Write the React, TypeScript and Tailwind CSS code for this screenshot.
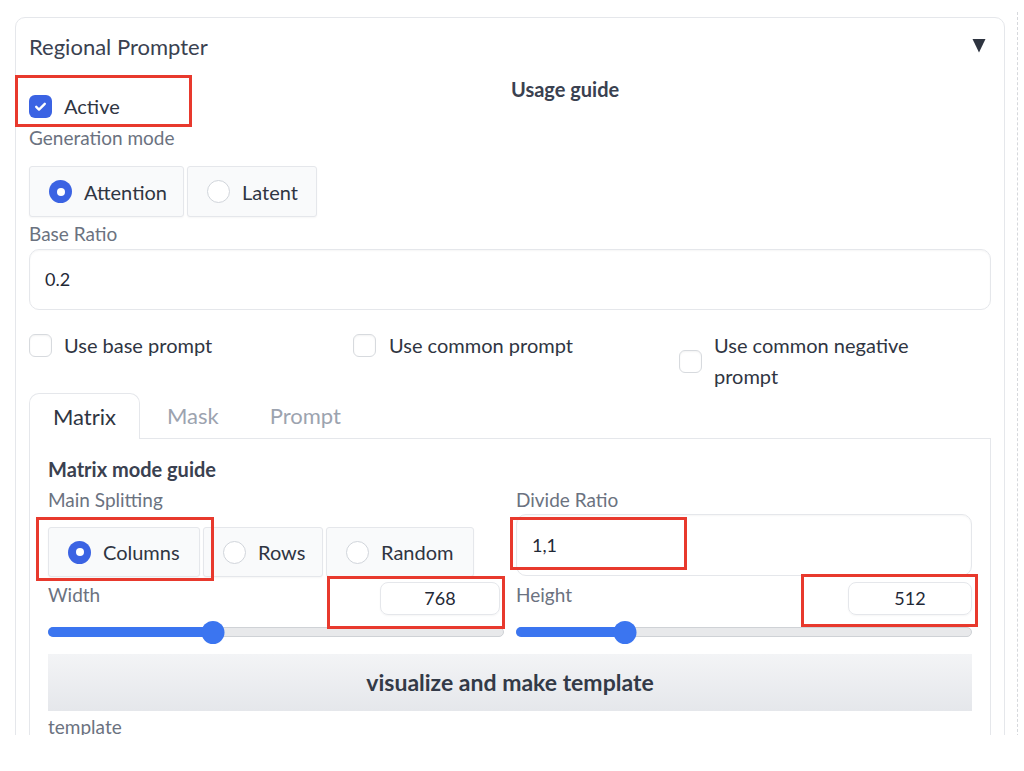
import React from 'react';

const font = { fontFamily: 'Lato, "Noto Sans", sans-serif' };

function Check({ checked }: { checked?: boolean }) {
  if (checked) {
    return (
      <span className="w-[23px] h-[23px] rounded-[6px] bg-[#3b63e3] flex items-center justify-center shrink-0">
        <svg width="15" height="15" viewBox="0 0 14 14" fill="none">
          <path d="M3 7.3l2.6 2.6L11 4.5" stroke="white" strokeWidth="2.2" strokeLinecap="round" strokeLinejoin="round" />
        </svg>
      </span>
    );
  }
  return <span className="block w-[23px] h-[23px] rounded-[6px] border border-[#d7dade] bg-white shadow-[inset_0_1px_2px_rgba(0,0,0,0.05)] shrink-0" />;
}

function Radio({ label, checked, w }: { label: string; checked?: boolean; w: string }) {
  return (
    <div className={`${w} h-full flex items-center gap-[12px] pl-[19px] bg-[#f9fafb] border border-[#e5e7eb] rounded-[3px] shadow-[0_1px_2px_rgba(0,0,0,0.04)]`}>
      {checked ? (
        <span className="w-[23px] h-[23px] rounded-full bg-[#3b63e3] flex items-center justify-center">
          <span className="w-[8px] h-[8px] rounded-full bg-white" />
        </span>
      ) : (
        <span className="w-[23px] h-[23px] rounded-full border border-[#d1d5db] bg-white" />
      )}
      <span className="text-[20px] text-[#2f3542]">{label}</span>
    </div>
  );
}

function Slider({ pct }: { pct: number }) {
  return (
    <div className="relative h-[24px] flex items-center">
      <div className="w-full h-[10px] rounded-full bg-[#e8e9eb] border border-[#cfd2d6]" />
      <div className="absolute left-0 h-[10px] rounded-full bg-[#3b75f0]" style={{ width: `${pct}%` }} />
      <div className="absolute w-[23px] h-[23px] rounded-full bg-[#3b75f0] -translate-x-1/2" style={{ left: `${pct}%` }} />
    </div>
  );
}

function RedBox({ className }: { className: string }) {
  return <div className={`absolute border-[3px] border-[#e8392d] pointer-events-none ${className}`} />;
}

export default function App() {
  return (
    <div className="w-[1024px] h-[771px] bg-white relative" style={font}>
      <div className="h-[735px] overflow-hidden flex pt-[17px] pl-[15px]">
        <div className="w-[990px] h-[800px] shrink-0 border border-[#e5e7eb] rounded-[10px] px-[13px] text-[#374151]">
          {/* header */}
          <div className="h-[58px] flex items-center justify-between">
            <span className="text-[22px] text-[#3a4150] leading-[28px]">Regional Prompter</span>
            <svg width="14" height="15" viewBox="0 0 14 15" className="mr-[5px] mt-[-4px]">
              <path d="M0.5 1h13L7 14.5z" fill="#2e3440" />
            </svg>
          </div>
          {/* active + usage guide */}
          <div className="flex h-[44px]">
            <div className="w-[482px] flex items-center gap-[12px] pt-[16px]">
              <Check checked />
              <span className="text-[20px] text-[#2f3542] leading-[24px]">Active</span>
            </div>
            <div className="pt-[1px] text-[20px] leading-[24px] font-bold text-[#3a4150]">Usage guide</div>
          </div>
          <div className="h-[36px] flex items-center text-[19px] text-[#6b7280]">Generation mode</div>
          <div className="flex gap-[3px] h-[51px] mt-[10px]">
            <Radio label="Attention" checked w="w-[155px]" />
            <Radio label="Latent" w="w-[130px]" />
          </div>
          <div className="h-[32px] flex items-center pt-[2px] text-[19px] text-[#6b7280]">Base Ratio</div>
          <div className="h-[61px] border border-[#e5e7eb] rounded-[10px] flex items-center px-[15px] text-[18px] text-[#1f2937] shadow-[inset_0_1px_2px_rgba(0,0,0,0.04)]">0.2</div>
          {/* checkboxes */}
          <div className="flex mt-[20px] h-[62px]">
            <div className="w-[324px] flex items-start gap-[12px]">
              <div className="mt-[4px]"><Check /></div>
              <span className="text-[20px] text-[#2f3542] leading-[31px]">Use base prompt</span>
            </div>
            <div className="w-[326px] flex items-start gap-[13px]">
              <div className="mt-[4px]"><Check /></div>
              <span className="text-[20px] text-[#2f3542] leading-[31px]">Use common prompt</span>
            </div>
            <div className="flex items-center gap-[12px] h-full">
              <Check />
              <span className="text-[20px] text-[#2f3542] leading-[31px] w-[210px]">Use common negative prompt</span>
            </div>
          </div>
          {/* tabs */}
          <div className="flex items-end h-[45px] mt-[1px]">
            <div className="w-[111px] h-[46px] border border-[#e5e7eb] border-b-0 rounded-t-[10px] flex items-center justify-center text-[22px] text-[#2f3542] bg-white relative top-[1px] z-10">Matrix</div>
            <div className="ml-[27px] h-[45px] flex items-center text-[22px] text-[#9ca3af]">Mask</div>
            <div className="ml-[51px] h-[45px] flex items-center text-[22px] text-[#9ca3af]">Prompt</div>
          </div>
          <div className="border border-[#e5e7eb] px-[18px] pt-[18px] h-[400px]">
            <div className="text-[20px] font-bold text-[#3a4150] leading-[24px]">Matrix mode guide</div>
            <div className="grid grid-cols-2 gap-x-[12px]">
              <div className="h-[96px]">
                <div className="h-[38px] flex items-center text-[19px] text-[#6b7280]">Main Splitting</div>
                <div className="flex gap-[3px] h-[50px] mt-[8px]">
                  <Radio label="Columns" checked w="w-[152px]" />
                  <Radio label="Rows" w="w-[120px]" />
                  <Radio label="Random" w="w-[148px]" />
                </div>
              </div>
              <div className="h-[96px]">
                <div className="h-[33px] pt-[7px] text-[19px] leading-[24px] text-[#6b7280]">Divide Ratio</div>
                <div className="h-[62px] border border-[#e5e7eb] rounded-[10px] flex items-center px-[15px] text-[18px] text-[#1f2937] shadow-[inset_0_1px_2px_rgba(0,0,0,0.04)]">1,1</div>
              </div>
              <div className="pt-[3px]">
                <div className="flex justify-between items-start h-[37px]">
                  <span className="text-[19px] leading-[24px] text-[#6b7280] mt-[3px]">Width</span>
                  <div className="w-[120px] h-[33px] mt-[2px] mr-[4px] border border-[#e5e7eb] rounded-[8px] flex items-center justify-center text-[18px] text-[#1f2937] shadow-[0_1px_2px_rgba(0,0,0,0.04)]">768</div>
                </div>
                <div className="mt-[3px]"><Slider pct={36.2} /></div>
              </div>
              <div className="pt-[3px]">
                <div className="flex justify-between items-start h-[37px]">
                  <span className="text-[19px] leading-[24px] text-[#6b7280] mt-[3px]">Height</span>
                  <div className="w-[124px] h-[33px] mt-[2px] border border-[#e5e7eb] rounded-[8px] flex items-center justify-center text-[18px] text-[#1f2937] shadow-[0_1px_2px_rgba(0,0,0,0.04)]">512</div>
                </div>
                <div className="mt-[3px]"><Slider pct={23.9} /></div>
              </div>
            </div>
            <div className="mt-[10px] h-[57px] bg-gradient-to-b from-[#f3f4f6] to-[#e5e7eb] flex items-center justify-center text-[23px] font-bold text-[#333a47]">visualize and make template</div>
            <div className="text-[19px] leading-[24px] text-[#6b7280] mt-[4px]">template</div>
          </div>
        </div>
        <div className="ml-[12px] mt-[-5px] border-l border-dashed border-[#d6d8dc] h-[735px]" />
      </div>
      <RedBox className="left-[15px] top-[75px] w-[177px] h-[52px]" />
      <RedBox className="left-[36px] top-[517px] w-[178px] h-[64px]" />
      <RedBox className="left-[327px] top-[576px] w-[178px] h-[53px]" />
      <RedBox className="left-[510px] top-[517px] w-[177px] h-[53px]" />
      <RedBox className="left-[801px] top-[574px] w-[177px] h-[53px]" />
    </div>
  );
}
